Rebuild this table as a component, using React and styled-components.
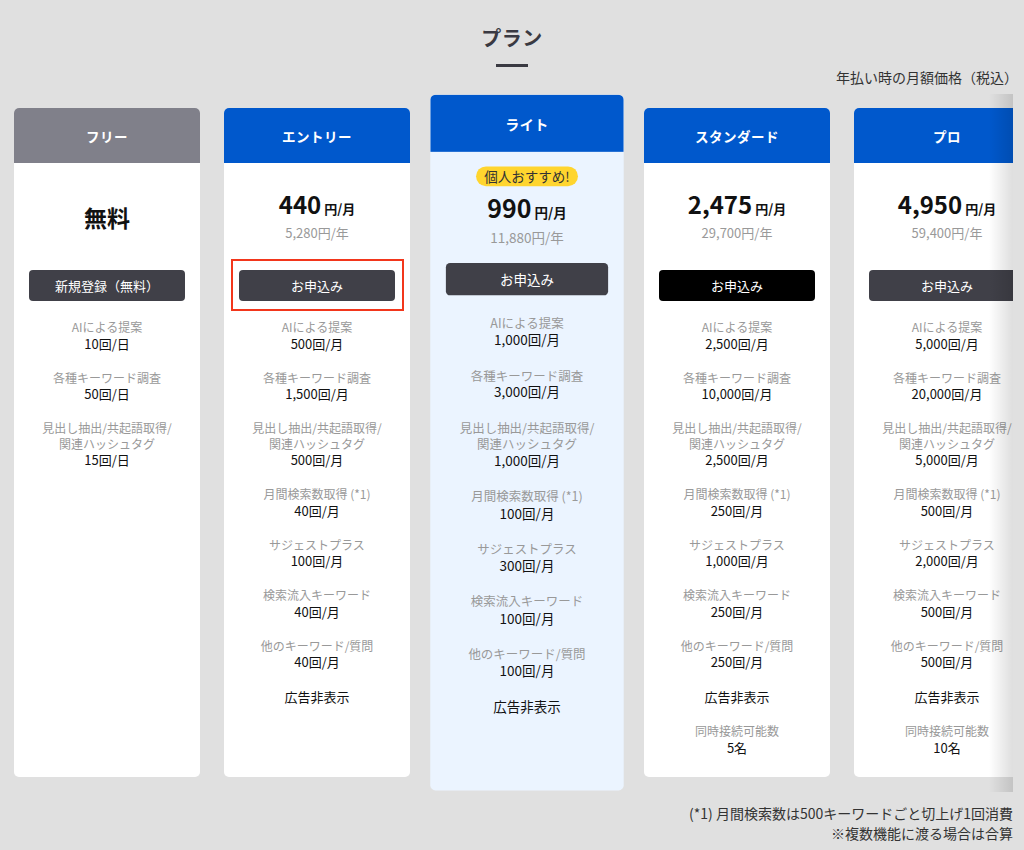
import React from 'react'
import styled, { createGlobalStyle } from 'styled-components'

const GlobalStyle = createGlobalStyle`
  body{
    margin:0;
    background:#e0e0e0;
    font-family:"Noto Sans CJK JP","Noto Sans",sans-serif;
    color:#222;
  }
`

const plans = [
  {
    name: 'フリー', tone: 'free', free: true, cta: '新規登録（無料）',
    features: [
      ['AIによる提案', '10回/日'],
      ['各種キーワード調査', '50回/日'],
      [['見出し抽出/共起語取得/', '関連ハッシュタグ'], '15回/日'],
    ],
  },
  {
    name: 'エントリー', price: '440', year: '5,280円/年', cta: 'お申込み', marked: true,
    features: [
      ['AIによる提案', '500回/月'],
      ['各種キーワード調査', '1,500回/月'],
      [['見出し抽出/共起語取得/', '関連ハッシュタグ'], '500回/月'],
      ['月間検索数取得 (*1)', '40回/月'],
      ['サジェストプラス', '100回/月'],
      ['検索流入キーワード', '40回/月'],
      ['他のキーワード/質問', '40回/月'],
      [null, '広告非表示'],
    ],
  },
  {
    name: 'ライト', price: '990', year: '11,880円/年', cta: 'お申込み', featured: true, badge: '個人おすすめ!',
    features: [
      ['AIによる提案', '1,000回/月'],
      ['各種キーワード調査', '3,000回/月'],
      [['見出し抽出/共起語取得/', '関連ハッシュタグ'], '1,000回/月'],
      ['月間検索数取得 (*1)', '100回/月'],
      ['サジェストプラス', '300回/月'],
      ['検索流入キーワード', '100回/月'],
      ['他のキーワード/質問', '100回/月'],
      [null, '広告非表示'],
    ],
  },
  {
    name: 'スタンダード', price: '2,475', year: '29,700円/年', cta: 'お申込み', dark: true,
    features: [
      ['AIによる提案', '2,500回/月'],
      ['各種キーワード調査', '10,000回/月'],
      [['見出し抽出/共起語取得/', '関連ハッシュタグ'], '2,500回/月'],
      ['月間検索数取得 (*1)', '250回/月'],
      ['サジェストプラス', '1,000回/月'],
      ['検索流入キーワード', '250回/月'],
      ['他のキーワード/質問', '250回/月'],
      [null, '広告非表示'],
      ['同時接続可能数', '5名'],
    ],
  },
  {
    name: 'プロ', price: '4,950', year: '59,400円/年', cta: 'お申込み',
    features: [
      ['AIによる提案', '5,000回/月'],
      ['各種キーワード調査', '20,000回/月'],
      [['見出し抽出/共起語取得/', '関連ハッシュタグ'], '5,000回/月'],
      ['月間検索数取得 (*1)', '500回/月'],
      ['サジェストプラス', '2,000回/月'],
      ['検索流入キーワード', '500回/月'],
      ['他のキーワード/質問', '500回/月'],
      [null, '広告非表示'],
      ['同時接続可能数', '10名'],
    ],
  },
]

export default function App() {
  return (
    <Page>
      <GlobalStyle />
      <Heading>
        <h2>プラン</h2>
        <span className="bar" />
      </Heading>
      <Note>年払い時の月額価格（税込）</Note>
      <Wrap>
        <Scroller>
          {plans.map((p) => (
            <Card key={p.name} $featured={p.featured}>
              <CardHead $free={p.free}>{p.name}</CardHead>
              <PriceArea>
                {p.badge && <Badge>{p.badge}</Badge>}
                {p.free ? (
                  <FreeLabel>無料</FreeLabel>
                ) : (
                  <>
                    <Price>{p.price}<small>円/月</small></Price>
                    <Yearly>{p.year}</Yearly>
                  </>
                )}
              </PriceArea>
              <ButtonSlot $marked={p.marked}>
                <Button $dark={p.dark}>{p.cta}</Button>
              </ButtonSlot>
              <Features>
                {p.features.map(([label, value], i) => (
                  <li key={i}>
                    {label && (
                      <Label>
                        {Array.isArray(label) ? <>{label[0]}<br />{label[1]}</> : label}
                      </Label>
                    )}
                    <Value>{value}</Value>
                  </li>
                ))}
              </Features>
            </Card>
          ))}
        </Scroller>
        <Fade />
      </Wrap>
      <Footer>
        <p>(*1) 月間検索数は500キーワードごと切上げ1回消費</p>
        <p>※複数機能に渡る場合は合算</p>
      </Footer>
    </Page>
  )
}

const Page = styled.div`
  min-height:850px;
  box-sizing:border-box;
  padding:24px 11px 0 0;
`

const Heading = styled.div`
  display:flex;
  flex-direction:column;
  align-items:center;
  padding-left:11px;
  h2{
    margin:0;
    font-size:20px;
    line-height:28px;
    font-weight:700;
    color:#3a3a42;
    letter-spacing:0.5px;
  }
  .bar{
    margin-top:12px;
    width:32px;
    height:3px;
    background:#3a3a42;
  }
`

const Note = styled.div`
  text-align:right;
  font-size:14px;
  line-height:20px;
  color:#333;
  margin-right:-5px;
`

const Wrap = styled.div`
  position:relative;
  margin-top:7px;
`

const Scroller = styled.div`
  display:flex;
  gap:24px;
  overflow:hidden;
  padding:14px 0 15px 14px;
`

const Card = styled.div`
  flex:0 0 186px;
  display:flex;
  flex-direction:column;
  background:${(p) => (p.$featured ? '#ebf4ff' : '#fff')};
  border-radius:5px;
  overflow:hidden;
  padding-bottom:20px;
  transform:${(p) => (p.$featured ? 'scale(1.04)' : 'none')};
`

const CardHead = styled.div`
  height:55px;
  display:flex;
  align-items:center;
  justify-content:center;
  background:${(p) => (p.$free ? '#80808a' : '#0058cc')};
  color:#fff;
  font-size:13.5px;
  font-weight:700;
  letter-spacing:0.5px;
`

const PriceArea = styled.div`
  height:107px;
  display:flex;
  flex-direction:column;
  align-items:center;
  justify-content:center;
`

const Badge = styled.span`
  height:19px;
  line-height:19px;
  padding:0 8px;
  margin-bottom:7px;
  border-radius:10px;
  background:#ffd52e;
  color:#333;
  font-size:13px;
`

const FreeLabel = styled.div`
  font-size:23px;
  font-weight:700;
  color:#111;
  line-height:30px;
  margin-top:1px;
`

const Price = styled.div`
  font-size:24px;
  font-weight:700;
  line-height:28px;
  color:#111;
  small{
    font-size:13px;
    margin-left:3px;
  }
`

const Yearly = styled.div`
  font-size:13px;
  line-height:20px;
  color:#999;
`

const ButtonSlot = styled.div`
  position:relative;
  display:flex;
  margin:0 15px;
  &::after{
    content:'';
    display:${(p) => (p.$marked ? 'block' : 'none')};
    position:absolute;
    top:-11px;
    bottom:-10px;
    left:-8px;
    right:-9px;
    border:2.5px solid #f2361b;
    pointer-events:none;
  }
`

const Button = styled.button`
  flex:1;
  height:31px;
  border:none;
  border-radius:4px;
  background:${(p) => (p.$dark ? '#000' : '#404048')};
  color:#fff;
  font-family:inherit;
  font-size:13px;
  cursor:pointer;
`

const Features = styled.ul`
  list-style:none;
  margin:18px 0 0;
  padding:0;
  display:flex;
  flex-direction:column;
  gap:17px;
  text-align:center;
`

const Label = styled.div`
  font-size:12px;
  line-height:15.5px;
  color:#999;
`

const Value = styled.div`
  font-size:13px;
  line-height:18px;
  font-weight:400;
  color:#111;
`

const Fade = styled.div`
  position:absolute;
  top:0;
  right:0;
  bottom:0;
  width:24px;
  background:linear-gradient(to right, rgba(0,0,0,0), rgba(0,0,0,0.13));
  pointer-events:none;
`

const Footer = styled.div`
  margin-top:11px;
  text-align:right;
  font-size:14px;
  line-height:20px;
  color:#333;
  p{ margin:0; }
`
